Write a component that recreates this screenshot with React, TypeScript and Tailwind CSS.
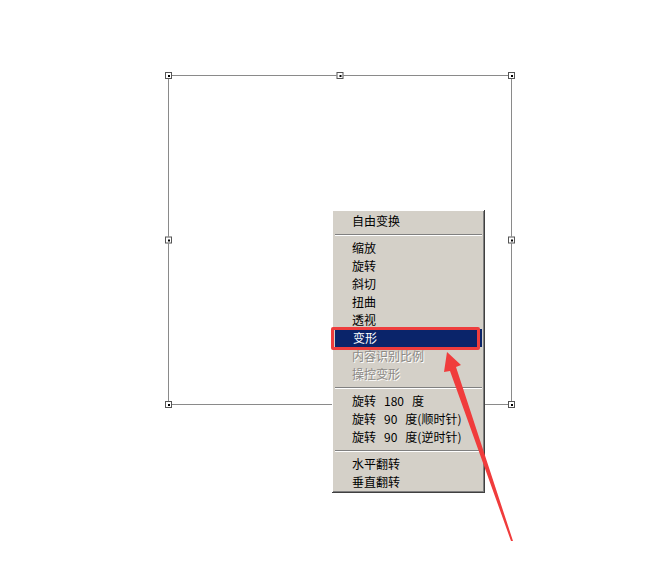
import React from "react";

type Item = { label: string[]; disabled?: boolean; active?: boolean } | "sep";

const items: Item[] = [
  { label: ["自由变换"] },
  "sep",
  { label: ["缩放"] },
  { label: ["旋转"] },
  { label: ["斜切"] },
  { label: ["扭曲"] },
  { label: ["透视"] },
  { label: ["变形"], active: true },
  { label: ["内容识别比例"], disabled: true },
  { label: ["操控变形"], disabled: true },
  "sep",
  { label: ["旋转", "180", "度"] },
  { label: ["旋转", "90", "度(顺时针)"] },
  { label: ["旋转", "90", "度(逆时针)"] },
  "sep",
  { label: ["水平翻转"] },
  { label: ["垂直翻转"] },
];

// handle spots on the transform box (bottom middle sits under the menu)
const handleSpots = [
  "-left-[4px] -top-[4px]",
  "left-1/2 -translate-x-1/2 -top-[4px]",
  "-right-[4px] -top-[4px]",
  "-left-[4px] top-1/2 -translate-y-1/2",
  "-right-[4px] top-1/2 -translate-y-1/2",
  "-left-[4px] -bottom-[4px]",
  "-right-[4px] -bottom-[4px]",
];

function Handle({ spot }: { spot: string }) {
  return (
    <div
      className={
        "absolute flex h-[7px] w-[7px] items-center justify-center border border-[#555] bg-white " +
        spot
      }
    >
      <div className="h-[2px] w-[2px] bg-black" />
    </div>
  );
}

function ContextMenu() {
  return (
    <div className="absolute left-[332px] top-[210px] w-[153px] bg-[#d4d0c8] p-[2px] shadow-[inset_-1px_-1px_#404040,inset_1px_1px_#ffffff,inset_-2px_-2px_#808080,inset_2px_2px_#d4d0c8]">
      {items.map((it, i) =>
        it === "sep" ? (
          <div key={i} className="flex h-[9px] items-center px-[1px]">
            <div className="w-full border-t border-b border-t-[#808080] border-b-white" />
          </div>
        ) : (
          <div
            key={i}
            className={
              "flex h-[18px] items-center gap-[8px] pl-[18px] text-[12px] leading-none " +
              (it.active
                ? "mx-[1px] bg-[#0a246a] text-white"
                : it.disabled
                ? "text-[#8c8a86] [text-shadow:1px_1px_0_#ffffff]"
                : "text-black")
            }
          >
            {it.label.map((p, j) => (
              <span key={j}>{p}</span>
            ))}
          </div>
        )
      )}
    </div>
  );
}

export default function App() {
  return (
    <div
      className="relative h-[578px] w-[666px] overflow-hidden bg-white pl-[168px] pt-[75px]"
      style={{ fontFamily: '"Noto Sans CJK SC", "Liberation Sans", sans-serif' }}
    >
      {/* transform box */}
      <div className="relative h-[330px] w-[344px] border border-[#8a8a8a]">
        {handleSpots.map((s, i) => (
          <Handle key={i} spot={s} />
        ))}
      </div>

      <ContextMenu />

      {/* red highlight frame */}
      <div className="absolute left-[331px] top-[327px] h-[23px] w-[149px] rounded-[2px] border-[3px] border-[#ee3d3d]" />

      {/* red arrow */}
      <svg className="absolute left-0 top-0" width="666" height="578" viewBox="0 0 666 578">
        <polygon
          points="447,352 461,365 456,367 513,541 511,541 450,371 444,372"
          fill="#f03c3c"
        />
      </svg>
    </div>
  );
}
